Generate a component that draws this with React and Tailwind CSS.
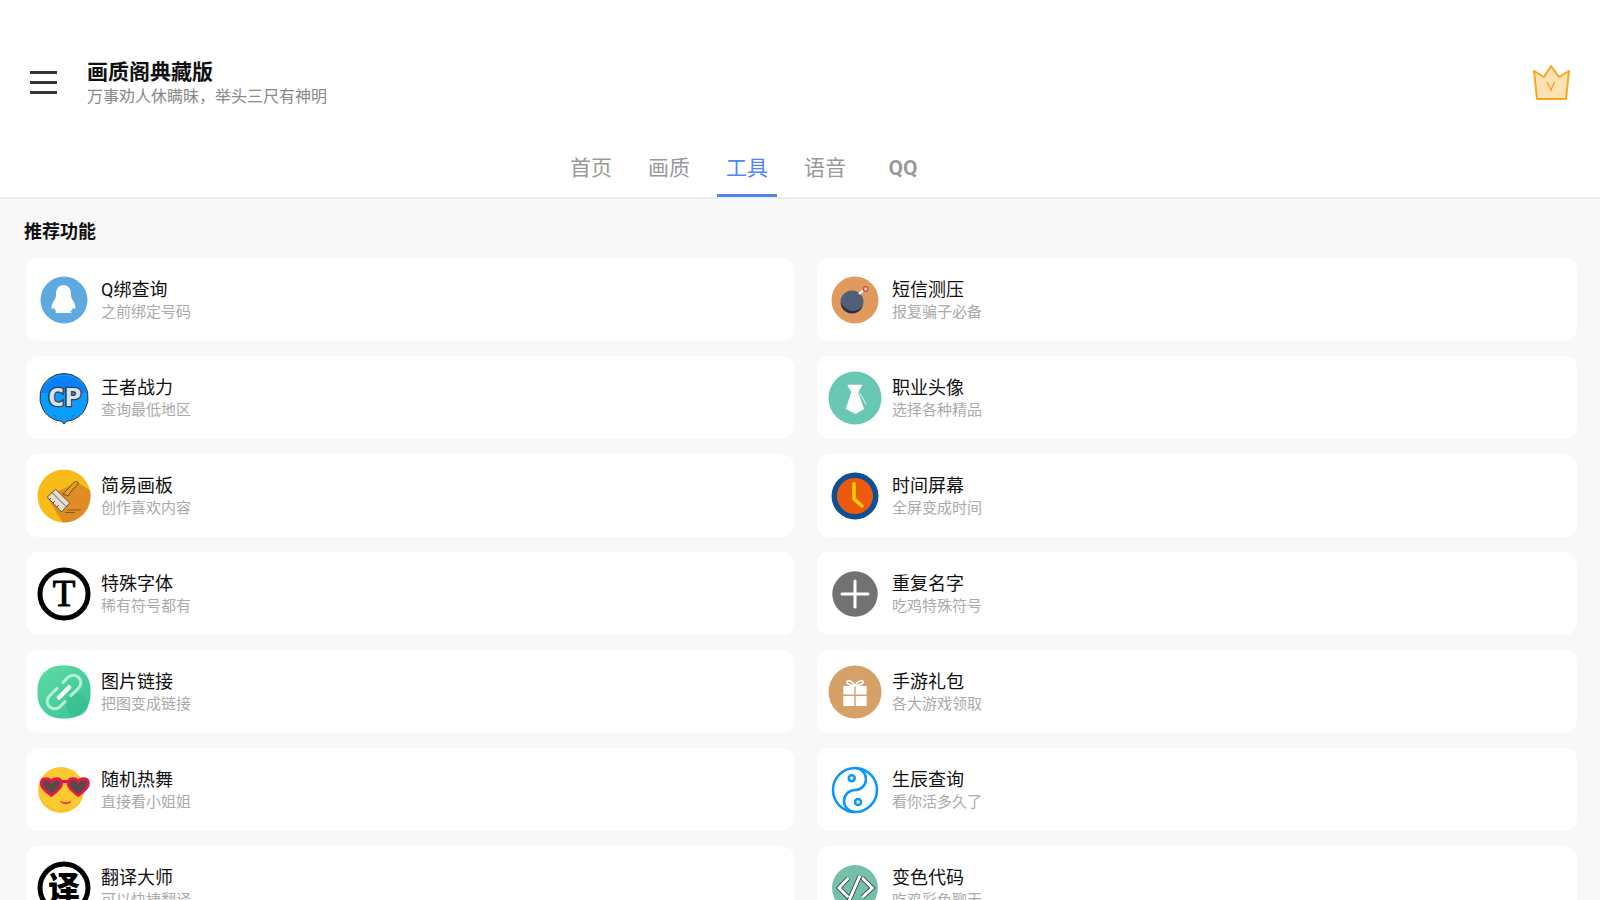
const QqIcon = () => (
  <svg viewBox="0 0 54 54" className="w-full h-full">
    <circle cx="27" cy="27" r="23.500" fill="#5eaae0" />
    <path d="M27 12c-5.500 0-8 4-8 9 0 3-.5 4.500-2 6.500-1.500 2.500-2.500 5-2.500 7 0 1.500 1 1.500 2.500.5.5 1.500 1.500 2.500 2.500 3.500-1 .5-1.500 1.500-.5 1.500h15c1 0 .5-1-.5-1.500 1-1 2-2 2.500-3.500 1.500 1 2.500 1 2.500-.5 0-2-1-4.500-2.500-7-1.500-2-2-3.500-2-6.500 0-5-2.500-9-8-9z" fill="#fff" />
  </svg>
)

const CpIcon = () => (
  <svg viewBox="0 0 54 54" className="w-full h-full">
    <path d="M27 2.500a24 24 0 0 1 9 46.300l-2 .5-4.500 1-2.500 2.700-2.500-2.700-4.500-1-2-.5a24 24 0 0 1 9-46.300z" fill="#0a9dff" stroke="#2b3440" strokeWidth="1" />
    <path d="M4 22a24 24 0 0 1 46 0z" fill="#0a80fb" />
    <text x="27.500" y="35" textAnchor="middle" fontFamily="'DejaVu Sans Mono', monospace" fontWeight="700" fontSize="25" fill="#d7e3ec" stroke="#333d48" strokeWidth="2.500" paintOrder="stroke" textLength="34" lengthAdjust="spacingAndGlyphs">CP</text>
    <path d="M19 46l-2-2M35 46l2-2" stroke="#2b3440" strokeWidth=".7" />
  </svg>
)

const BrushIcon = () => (
  <svg viewBox="0 0 54 54" className="w-full h-full">
    <defs>
      <clipPath id="brush-clip"><circle cx="27" cy="27" r="26.500" /></clipPath>
    </defs>
    <circle cx="27" cy="27" r="26.500" fill="#f7bc18" />
    <path d="M40 13L54 22V54H26L10 28z" fill="#dd8d24" clipPath="url(#brush-clip)" />
    <path d="M26 25l5-5c2-2 3-4 5-6 2-2 5-2 5 0 0 3-3 4-5 6l-5 7z" fill="#e8a020" stroke="#4a3a20" strokeWidth=".8" />
    <path d="M10.300 28l8.400-7.700 14 13.700-8.200 9z" fill="#e6dccb" stroke="#3f3a30" strokeWidth=".8" />
    <path d="M15 23.500l14 14M14 29l-2 2M18 32l-2 2M22 36l-2 2" stroke="#3f3a30" strokeWidth=".8" fill="none" />
    <path d="M30 41h14M28 43.500h10" stroke="#6b5022" strokeWidth=".8" />
  </svg>
)

const FontIcon = () => (
  <svg viewBox="0 0 54 54" className="w-full h-full">
    <circle cx="27" cy="27" r="24" fill="#fff" stroke="#000" strokeWidth="5" />
    <text x="27" y="39" textAnchor="middle" fontFamily="'Liberation Serif', serif" fontSize="37" fill="#000" stroke="#000" strokeWidth="1">T</text>
  </svg>
)

const LinkIcon = () => (
  <svg viewBox="0 0 54 54" className="w-full h-full">
    <defs>
      <linearGradient id="link-bg" x1="0" y1="0" x2="1" y2="1">
        <stop offset="0" stopColor="#5fdca6" />
        <stop offset="1" stopColor="#37c397" />
      </linearGradient>
    </defs>
    <rect x=".5" y=".5" width="53" height="53" rx="23" fill="url(#link-bg)" />
    <circle cx="40" cy="40" r="11" fill="#33bd90" opacity=".6" />
    <path d="M20 23.400L12.200 31.200A7.500 7.500 0 0 0 22.800 41.800L28 36.600M34 30.600L41.800 22.800A7.500 7.500 0 0 0 31.200 12.200L26 17.400" fill="none" stroke="#b8f0d4" strokeWidth="3" strokeLinecap="round" />
    <path d="M22 32.500l10-10" stroke="#fff" strokeWidth="4.500" strokeLinecap="round" />
  </svg>
)

const EmojiIcon = () => (
  <svg viewBox="0 0 54 54" className="w-full h-full">
    <circle cx="24" cy="27" r="23" fill="#fdc92f" />
    <path d="M1.500 30a23 23 0 0 0 45 0c-3 11-12 18-23 17.500C13 47 5 40 1.500 30z" fill="#f4a92a" />
    <path d="M22 18.500h12" stroke="#e4184f" strokeWidth="3" />
    <path d="M14.300 18.500c-2-3.500-9-4-10 .5-1 5 4 9 10 13.500 6-4.500 11-8.500 10-13.500-1-4.500-8-4-10-.5z" fill="#5a4a47" stroke="#e4184f" strokeWidth="2.800" />
    <path d="M41.300 18.500c-2-3.500-9-4-10 .5-1 5 4 9 10 13.500 6-4.500 11-8.500 10-13.500-1-4.500-8-4-10-.5z" fill="#5a4a47" stroke="#e4184f" strokeWidth="2.800" />
    <path d="M23 38c2 2 8 2 11 0-1 3.500-9 3.500-11 0z" fill="#e4184f" stroke="#e4184f" strokeWidth=".5" />
  </svg>
)

const TranslateIcon = () => (
  <svg viewBox="0 0 54 54" className="w-full h-full">
    <circle cx="27" cy="27" r="24" fill="#fff" stroke="#000" strokeWidth="5" />
    <text x="27" y="39" textAnchor="middle" fontFamily="'Noto Sans CJK SC', sans-serif" fontWeight="900" fontSize="32" fill="#000">译</text>
  </svg>
)

const BombIcon = () => (
  <svg viewBox="0 0 54 54" className="w-full h-full">
    <circle cx="27" cy="27" r="23.500" fill="#e09a5d" />
    <circle cx="24" cy="29" r="11.500" fill="#4f6078" />
    <path d="M12.600 30a11.500 11.500 0 0 0 22.500 2c-3 5-9 7-13 5.500-4-1-7-4-9.500-7.500z" fill="#2d2f38" />
    <path d="M31 21l4-3.500" stroke="#fff" strokeWidth="2" />
    <circle cx="37.700" cy="16" r="2.300" fill="#f5c9b0" stroke="#d8434a" strokeWidth="1.200" />
  </svg>
)

const TieIcon = () => (
  <svg viewBox="0 0 54 54" className="w-full h-full">
    <circle cx="27" cy="27" r="26.500" fill="#68c8b3" />
    <path d="M19.300 13.700h15l-4 7.600L36 38l-8.300 5-10-5 5.600-16.700z" fill="#fff" />
    <path d="M32 22l6 11.500" stroke="#fff" strokeWidth=".8" />
  </svg>
)

const ClockIcon = () => (
  <svg viewBox="0 0 54 54" className="w-full h-full">
    <circle cx="27" cy="27" r="23.500" fill="#0f4f96" />
    <circle cx="27" cy="27" r="18" fill="#ee5a0c" />
    <path d="M26 14.700V30l8 7" fill="none" stroke="#fdd000" strokeWidth="3.500" strokeLinecap="round" strokeLinejoin="round" />
  </svg>
)

const PlusIcon = () => (
  <svg viewBox="0 0 54 54" className="w-full h-full">
    <circle cx="27" cy="27" r="22.700" fill="#727272" />
    <path d="M27 14v26M14 27h26" stroke="#fff" strokeWidth="3" strokeLinecap="round" />
  </svg>
)

const GiftIcon = () => (
  <svg viewBox="0 0 54 54" className="w-full h-full">
    <circle cx="27" cy="27" r="26.500" fill="#d6a069" />
    <path d="M15.300 21h11v8.500h-11zM27.700 21h11v8.500h-11zM15.300 31h11v10h-11zM27.700 31h11v10h-11z" fill="#fff" />
    <path d="M27 20.500c-2-4-7-6-8-4s3 4 8 4c5 0 9-2 8-4s-6 0-8 4z" fill="none" stroke="#fff" strokeWidth="1.600" />
  </svg>
)

const YinYangIcon = () => (
  <svg viewBox="0 0 54 54" className="w-full h-full" fill="none" stroke="#0a96fa" strokeWidth="2.500">
    <circle cx="27" cy="27" r="22" />
    <path d="M27 5c6.200 0 11 5 11 11s-4.800 11-11 11-11 5-11 11 4.800 11 11 11" />
    <circle cx="23.700" cy="15.300" r="3" />
    <circle cx="30" cy="39" r="3" />
  </svg>
)

const CodeIcon = () => (
  <svg viewBox="0 0 54 54" className="w-full h-full">
    <circle cx="27" cy="27" r="23" fill="#76bfa8" />
    <path d="M20.300 17L11 27l9.300 9.300M34.300 17l10 10-10 9.300M32 14.700L21 39.700" fill="none" stroke="#22333a" strokeWidth="4.500" />
    <path d="M20.300 17L11 27l9.300 9.300M34.300 17l10 10-10 9.300M32 14.700L21 39.700" fill="none" stroke="#fff" strokeWidth="3" />
  </svg>
)

const rows = [
  [
    { title: "Q绑查询", desc: "之前绑定号码", icon: <QqIcon /> },
    { title: "短信测压", desc: "报复骗子必备", icon: <BombIcon /> },
  ],
  [
    { title: "王者战力", desc: "查询最低地区", icon: <CpIcon /> },
    { title: "职业头像", desc: "选择各种精品", icon: <TieIcon /> },
  ],
  [
    { title: "简易画板", desc: "创作喜欢内容", icon: <BrushIcon /> },
    { title: "时间屏幕", desc: "全屏变成时间", icon: <ClockIcon /> },
  ],
  [
    { title: "特殊字体", desc: "稀有符号都有", icon: <FontIcon /> },
    { title: "重复名字", desc: "吃鸡特殊符号", icon: <PlusIcon /> },
  ],
  [
    { title: "图片链接", desc: "把图变成链接", icon: <LinkIcon /> },
    { title: "手游礼包", desc: "各大游戏领取", icon: <GiftIcon /> },
  ],
  [
    { title: "随机热舞", desc: "直接看小姐姐", icon: <EmojiIcon /> },
    { title: "生辰查询", desc: "看你活多久了", icon: <YinYangIcon /> },
  ],
  [
    { title: "翻译大师", desc: "可以快捷翻译", icon: <TranslateIcon /> },
    { title: "变色代码", desc: "吃鸡彩色聊天", icon: <CodeIcon /> },
  ],
]

const tabs = ["首页", "画质", "工具", "语音", "QQ"]

function Card({ item, className }) {
  return (
    <div className={`flex items-center h-[83px] pl-[10.500px] gap-[10.500px] bg-white rounded-[12px] ${className}`}>
      <div className="w-[54px] h-[54px] shrink-0">{item.icon}</div>
      <div className="flex flex-col">
        <span className="text-[18px] leading-[24px] text-[#111]">{item.title}</span>
        <span className="text-[15px] leading-[20px] text-[#aaa]">{item.desc}</span>
      </div>
    </div>
  )
}

export default function App() {
  return (
    <div className="h-[900px] overflow-hidden bg-[#f8f8f8] font-['Roboto','Noto_Sans_CJK_SC',sans-serif]">
      <div className="bg-white border-b-2 border-[#eeeeee] h-[199px]">
        <div className="flex items-center h-[130px] pt-[38px] pl-[30px] pr-[30px]">
          <div className="w-[27px] flex flex-col gap-[7px] mt-[-4px]">
            <div className="h-[3px] bg-[#333]" />
            <div className="h-[3px] bg-[#333]" />
            <div className="h-[3px] bg-[#333]" />
          </div>
          <div className="ml-[30px] flex flex-col">
            <span className="text-[21px] leading-[26px] font-bold text-[#111]">画质阁典藏版</span>
            <span className="text-[16px] leading-[24px] text-[#888]">万事劝人休瞒昧，举头三尺有神明</span>
          </div>
          <svg viewBox="0 0 40 40" className="w-[40px] h-[40px] ml-auto mr-[-1px]">
            <path d="M3 7l10 6 7-11 8 11 10-6-3 28H6z" fill="#fee2b4" stroke="#f5a81c" strokeWidth="2" strokeLinejoin="round" />
            <path d="M16 18l4 8 3.500-8" fill="none" stroke="#f5a81c" strokeWidth="1.500" />
          </svg>
        </div>
        <div className="flex pl-[561px] gap-[18px] h-[67px]">
          {tabs.map((t) => (
            <div
              key={t}
              className={`w-[60px] flex items-center justify-center h-[67px] pt-[13px] text-[21px] ${
                t === "工具" ? "text-[#4f86f7] border-b-[3px] border-[#4f86f7]" : "text-[#999] border-b-[3px] border-transparent"
              } ${t === "QQ" ? "font-bold" : ""}`}
            >
              {t}
            </div>
          ))}
        </div>
      </div>
      <div className="pl-[24px] pt-[20px] pb-[14px] text-[18px] leading-[25px] font-bold text-[#111]">推荐功能</div>
      <div className="flex flex-col gap-[15px]">
        {rows.map((r) => (
          <div key={r[0].title} className="flex pl-[26px] pr-[23px] gap-[23px]">
            <Card item={r[0]} className="w-[768px]" />
            <Card item={r[1]} className="w-[760px]" />
          </div>
        ))}
      </div>
    </div>
  )
}
